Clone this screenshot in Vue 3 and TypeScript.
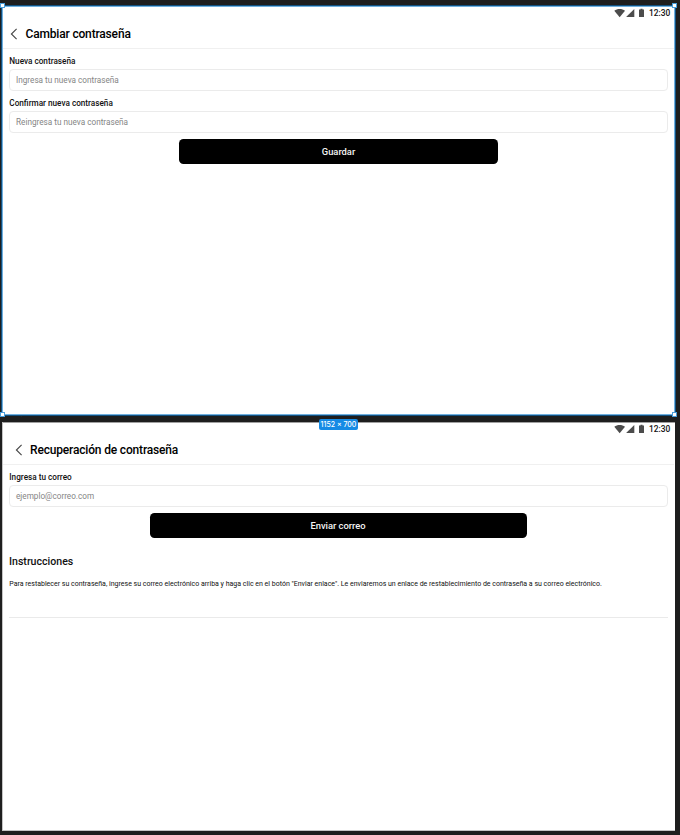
<script setup lang="ts">
interface Field {
  label: string
  placeholder: string
}

interface Screen {
  id: string
  title: string
  fields: Field[]
  action: string
  instructions?: { heading: string; body: string }
}

const screens: Screen[] = [
  {
    id: 'change',
    title: 'Cambiar contraseña',
    fields: [
      { label: 'Nueva contraseña', placeholder: 'Ingresa tu nueva contraseña' },
      { label: 'Confirmar nueva contraseña', placeholder: 'Reingresa tu nueva contraseña' },
    ],
    action: 'Guardar',
  },
  {
    id: 'recover',
    title: 'Recuperación de contraseña',
    fields: [{ label: 'Ingresa tu correo', placeholder: 'ejemplo@correo.com' }],
    action: 'Enviar correo',
    instructions: {
      heading: 'Instrucciones',
      body: 'Para restablecer su contraseña, ingrese su correo electrónico arriba y haga clic en el botón "Enviar enlace". Le enviaremos un enlace de restablecimiento de contraseña a su correo electrónico.',
    },
  },
]
</script>

<template>
  <main class="canvas">
    <section v-for="screen in screens" :key="screen.id" class="frame" :class="screen.id">
      <div class="status">
        <svg class="status-icons" viewBox="0 0 32 10" width="32" height="10">
          <path d="M0.3 2.7C3.3.4 8 .4 11 2.7L5.65 9.2Z" />
          <path d="M20.3 1V9H12.1Z" />
          <path d="M25 1.6h1.5V.8h2v.8H30V9h-5Z" />
        </svg>
        <span class="clock">12:30</span>
      </div>
      <header class="bar">
        <svg class="back" viewBox="0 0 8 12" width="8" height="12">
          <path d="M6.6.9 1.4 6l5.2 5.1" />
        </svg>
        <h1 class="title">{{ screen.title }}</h1>
      </header>
      <form class="form" @submit.prevent>
        <div v-for="field in screen.fields" :key="field.label" class="field">
          <label class="label">{{ field.label }}</label>
          <div class="input"><span>{{ field.placeholder }}</span></div>
        </div>
        <button class="action" type="submit">{{ screen.action }}</button>
      </form>
      <article v-if="screen.instructions" class="instructions">
        <h2>{{ screen.instructions.heading }}</h2>
        <p>{{ screen.instructions.body }}</p>
      </article>
      <template v-if="screen.id === 'change'">
        <i class="handle top left"></i>
        <i class="handle top right"></i>
        <i class="handle bottom left"></i>
        <i class="handle bottom right"></i>
        <span class="size-badge">1152 × 700</span>
      </template>
      <span v-else class="frame-name">Recuperación contraseña</span>
    </section>
  </main>
</template>

<style>
body {
  background: #1e1e1e;
}
</style>

<style scoped>
.canvas {
  box-sizing: border-box;
  display: flex;
  flex-direction: column;
  gap: 7px;
  width: 680px;
  height: 835px;
  padding: 6px 5px 4px 2px;
  overflow: hidden;
  background: #1e1e1e;
  font-family: Roboto, "Liberation Sans", sans-serif;
  color: #111;
}
.frame {
  position: relative;
  box-sizing: border-box;
  width: 673px;
  height: 409px;
  background: #fff;
}
.frame.change {
  z-index: 1;
  box-shadow: inset 0 0 0 1px #70b0df, 0 0 0 1px #12507f;
}
.frame.recover {
  box-shadow: inset 1px -1px 0 #c4c4c4, inset 0 1px 0 #a0a0a0;
}
.status {
  display: flex;
  align-items: center;
  justify-content: flex-end;
  gap: 3px;
  height: 14px;
  padding-right: 5px;
}
.status-icons {
  fill: #4c4c4c;
}
.clock {
  width: 21px;
  font-size: 8.4px;
  font-weight: 500;
  line-height: 10px;
}
.bar {
  display: flex;
  align-items: center;
  box-sizing: border-box;
  height: 29px;
  margin: 0 1px;
  padding: 0 0 1px 7px;
  border-bottom: 1px solid #f0f0f0;
}
.recover .bar {
  padding-left: 11.5px;
}
.back {
  fill: none;
  stroke: #444;
  stroke-width: 1.1;
}
.title {
  margin: 0 0 0 7.5px;
  font-size: 12px;
  font-weight: 500;
  line-height: 14px;
  letter-spacing: -0.17px;
  color: #000;
}
.form {
  display: flex;
  flex-direction: column;
  align-items: center;
  gap: 7px;
  padding: 7px 7px 0;
}
.field {
  width: 100%;
}
.label {
  display: block;
  height: 13px;
  padding-left: 0.3px;
  font-size: 8.2px;
  font-weight: 500;
  line-height: 11px;
}
.input {
  box-sizing: border-box;
  height: 22px;
  padding: 0 6px;
  border: 1px solid #ebebeb;
  border-radius: 4px;
  font-size: 8.2px;
  line-height: 20px;
  color: #858585;
}
.action {
  width: 319px;
  height: 25px;
  margin-top: -1px;
  padding: 0;
  border: 0;
  border-radius: 4.5px;
  background: #000;
  color: #f4f4f4;
  font: 500 9.35px/25px Roboto, "Liberation Sans", sans-serif;
}
.recover .action {
  width: 377px;
  margin-right: 1px;
}
.instructions {
  height: 79px;
  margin: 0 7px;
  border-bottom: 1px solid #eaeaea;
}
.instructions h2 {
  margin: 0;
  padding-top: 17px;
  font-size: 10.6px;
  font-weight: 500;
  line-height: 14px;
}
.instructions p {
  margin: 9px 0 0;
  padding-left: 0.3px;
  font-size: 7.01px;
  line-height: 11px;
  white-space: nowrap;
}
.handle {
  position: absolute;
  box-sizing: border-box;
  width: 5px;
  height: 5px;
  border: 1px solid #4a9edb;
  background: #fff;
}
.top {
  top: -3px;
}
.bottom {
  bottom: -2px;
}
.left {
  left: -2px;
}
.right {
  right: -2px;
}
.size-badge {
  position: absolute;
  top: 413px;
  left: 317px;
  width: 39px;
  height: 11px;
  border-radius: 2px;
  background: #168be5;
  color: #fff;
  font: 500 7px/11px Inter, Roboto, sans-serif;
  text-align: center;
  white-space: nowrap;
}
.frame-name {
  position: absolute;
  top: -13px;
  left: 3px;
  color: #777;
  font: 400 6.5px/8px Inter, Roboto, sans-serif;
  white-space: nowrap;
}
</style>
